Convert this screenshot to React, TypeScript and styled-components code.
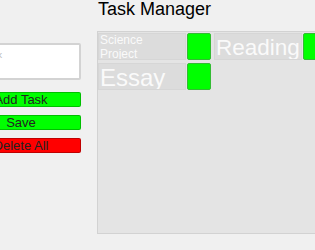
import styled, { createGlobalStyle } from "styled-components";

const GlobalStyle = createGlobalStyle`
    html, body {
        margin: 0;
        padding: 0;
        background-color: #f0f0f0;
        font-family: "Liberation Sans", Arial, sans-serif;
        overflow: hidden;
    }
`;

const Page = styled.div`
    width: 315px;
    height: 250px;
    display: flex;
    flex-direction: row;
    justify-content: center;
    gap: 16px;
`;

const Sidebar = styled.div`
    flex: 0 0 120px;
    display: flex;
    flex-direction: column;
    padding-top: 43px;
`;

const TaskInput = styled.textarea`
    width: 120px;
    height: 37px;
    box-sizing: border-box;
    border: 2px solid #d3d3d3;
    border-radius: 2px;
    background: white;
    resize: none;
    font-family: "Liberation Sans", Arial, sans-serif;
    font-size: 9px;
    padding: 5px 2px;
    margin: 0 0 12px 0;
    outline: none;
    &::placeholder {
        color: #b8b8b8;
    }
`;

const ActionButton = styled.button<{ color: string }>`
    width: 120px;
    height: 15px;
    box-sizing: border-box;
    padding: 0;
    margin: 0 0 8px 0;
    background-color: ${props => props.color};
    border: 1px solid rgba(0, 0, 0, 0.25);
    border-radius: 2px;
    font-family: "Liberation Sans", Arial, sans-serif;
    font-size: 13px;
    line-height: 13px;
    color: #222;
`;

const Main = styled.div`
    flex: 0 0 257px;
    display: flex;
    flex-direction: column;
`;

const Title = styled.h1`
    margin: 0 0 13px 1px;
    font-size: 18px;
    line-height: 18px;
    font-weight: normal;
    color: black;
`;

const Board = styled.div`
    height: 203px;
    box-sizing: border-box;
    background-color: #e4e4e4;
    border: 1px solid #d2d2d2;
    border-right: none;
    display: flex;
    flex-wrap: wrap;
    align-content: flex-start;
    gap: 3px 3px;
    padding: 1px 0 0 0;
`;

const Card = styled.div`
    display: flex;
    flex-direction: row;
    gap: 1px;
    height: 27px;
`;

const CardText = styled.div<{ size: number }>`
    width: 88px;
    box-sizing: border-box;
    background-color: #dcdcdc;
    border: 1px solid #d6d6d6;
    color: #fafafa;
    font-size: ${props => props.size}px;
    line-height: ${props => props.size < 14 ? 14 : 27}px;
    padding: 0 4px 0 1px;
    overflow: hidden;
    display: flex;
    align-items: ${props => props.size < 14 ? "center" : "flex-start"};
    white-space: ${props => props.size < 14 ? "normal" : "nowrap"};
`;

const DoneButton = styled.button`
    width: 24px;
    height: 27px;
    box-sizing: border-box;
    background-color: #00ff00;
    border: 1px solid #33bb33;
    border-radius: 2px;
    padding: 0;
`;

const tasks = [
    { name: "Science Project", size: 12 },
    { name: "Reading", size: 22.5 },
    { name: "Essay", size: 24 },
];

const App = () => {
    return <>
        <GlobalStyle />
        <Page>
            <Sidebar>
                <TaskInput placeholder="New task" />
                <ActionButton color="#00ff00">Add Task</ActionButton>
                <ActionButton color="#00ff00">Save</ActionButton>
                <ActionButton color="#ff0000">Delete All</ActionButton>
            </Sidebar>
            <Main>
                <Title>Task Manager</Title>
                <Board>
                    {tasks.map(task =>
                        <Card key={task.name}>
                            <CardText size={task.size}>{task.name}</CardText>
                            <DoneButton />
                        </Card>
                    )}
                </Board>
            </Main>
        </Page>
    </>
}

export default App;
